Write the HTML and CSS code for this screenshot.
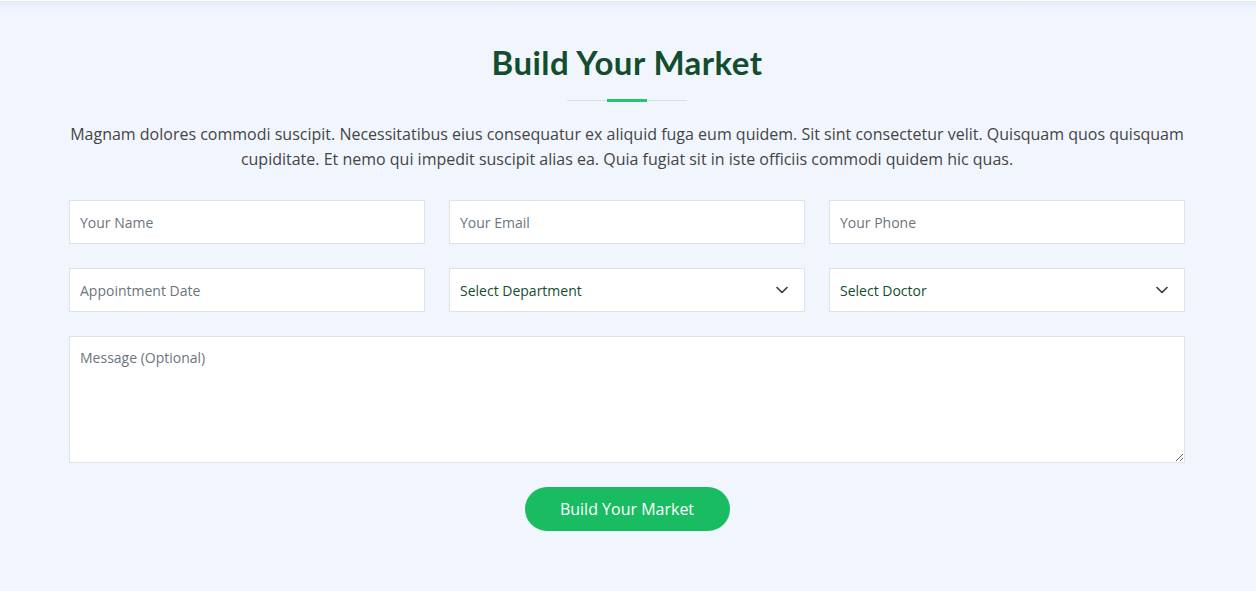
FILE: index.html
```html
<!DOCTYPE html>
<html lang="en">
<head>
<meta charset="utf-8">
<title>Build Your Market</title>
<link rel="stylesheet" href="styles.css">
</head>
<body>
<section class="market">
  <div class="container">
    <div class="section-title">
      <h2>Build Your Market</h2>
      <div class="divider"><span></span></div>
      <p>Magnam dolores commodi suscipit. Necessitatibus eius consequatur ex aliquid fuga eum quidem. Sit sint consectetur velit. Quisquam quos quisquam cupiditate. Et nemo qui impedit suscipit alias ea. Quia fugiat sit in iste officiis commodi quidem hic quas.</p>
    </div>
    <form class="form">
      <div class="row">
        <input class="field" type="text" placeholder="Your Name">
        <input class="field" type="email" placeholder="Your Email">
        <input class="field" type="tel" placeholder="Your Phone">
      </div>
      <div class="row">
        <input class="field" type="text" placeholder="Appointment Date">
        <div class="select">
          <span>Select Department</span>
          <svg width="12" height="8" viewBox="0 0 12 8"><path d="M1 1.5l5 5 5-5" fill="none" stroke="#343a40" stroke-width="1.6" stroke-linecap="round" stroke-linejoin="round"/></svg>
        </div>
        <div class="select">
          <span>Select Doctor</span>
          <svg width="12" height="8" viewBox="0 0 12 8"><path d="M1 1.5l5 5 5-5" fill="none" stroke="#343a40" stroke-width="1.6" stroke-linecap="round" stroke-linejoin="round"/></svg>
        </div>
      </div>
      <textarea class="field message" placeholder="Message (Optional)"></textarea>
      <div class="actions">
        <button type="button" class="btn">Build Your Market</button>
      </div>
    </form>
  </div>
</section>
</body>
</html>
```
FILE: styles.css
```css
* { box-sizing: border-box; }
html, body { margin: 0; padding: 0; background: #fff; }
body { font-family: "Open Sans", "Liberation Sans", sans-serif; color: #444; }

.market {
  margin-top: 1px;
  height: 590px;
  border-top: 1px solid #e3e8ee;
  background: linear-gradient(to bottom, #e5effb 0px, #f1f6fe 12px, #f1f6fe 100%);
  padding-top: 39px;
}

.container {
  width: 1140px;
  margin: 0 auto;
  padding: 0 13px 0 11px;
}

.section-title { text-align: center; }
.section-title h2 {
  margin: 0;
  font-family: "Lato", "Open Sans", sans-serif;
  font-weight: 700;
  font-size: 33px;
  line-height: 42px;
  color: #124d2e;
  letter-spacing: 0.45px;
}
.divider {
  position: relative;
  width: 120px;
  height: 3px;
  margin: 16px auto 0;
  display: flex;
  align-items: center;
  justify-content: center;
}
.divider::before {
  content: "";
  position: absolute;
  left: 0; right: 0; top: 1px;
  height: 1px;
  background: #dcdfe3;
}
.divider span {
  position: relative;
  width: 40px;
  height: 3px;
  background: #1ec96c;
}
.section-title p {
  margin: 20px 0 0;
  font-size: 16px;
  line-height: 25px;
  color: #444444;
}

.form { margin-top: 28px; }
.row {
  display: grid;
  grid-template-columns: repeat(3, 1fr);
  gap: 24px;
  margin-bottom: 24px;
}
.field, .select {
  display: block;
  width: 100%;
  height: 44px;
  background: #fff;
  border: 1px solid #dee2e6;
  border-radius: 0;
  padding: 0 10px;
  font-family: "Open Sans", "Liberation Sans", sans-serif;
  font-size: 14px;
  color: #212529;
  outline: none;
}
.field::placeholder { color: #6c757d; opacity: 1; }
.select {
  display: flex;
  align-items: center;
  justify-content: space-between;
  padding: 0 16px 0 10px;
  color: #124d2e;
}
.select svg { flex: none; }
.message {
  height: 127px;
  padding: 10px;
  line-height: 21px;
  resize: vertical;
}
.actions {
  display: flex;
  justify-content: center;
  margin-top: 24px;
}
.btn {
  width: 205px;
  height: 44px;
  border: 0;
  border-radius: 50px;
  background: #19bc60;
  color: #fff;
  font-family: "Open Sans", "Liberation Sans", sans-serif;
  font-size: 16px;
  cursor: pointer;
}
```
